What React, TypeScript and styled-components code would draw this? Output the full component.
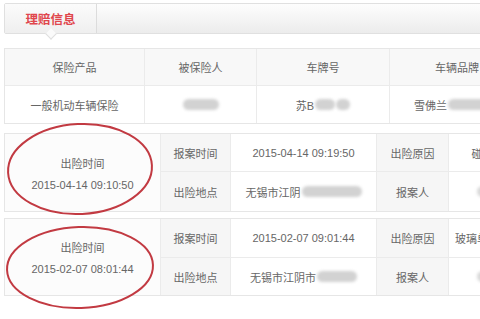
import React from "react";
import styled, { createGlobalStyle } from "styled-components";

const GlobalStyle = createGlobalStyle`
  html, body {
    margin: 0;
    padding: 0;
    background: #ffffff;
    overflow: hidden;
  }
  body {
    font-family: "Liberation Sans", "Noto Sans CJK SC", sans-serif;
    font-size: 11px;
    color: #666666;
  }
`;

const Page = styled.main`
  position: relative;
  width: 560px;
  height: 319px;
  padding: 3px 0 0 4px;
  box-sizing: border-box;
`;

const TabBar = styled.div`
  height: 29px;
  display: flex;
  border: 1px solid #e0e0e0;
  border-radius: 2px;
  background: linear-gradient(#fdfdfd, #ececec);
`;

const Tab = styled.div`
  position: relative;
  width: 91px;
  display: flex;
  align-items: center;
  justify-content: center;
  border-right: 1px solid #dcdcdc;
  background: linear-gradient(#fbfbfb, #efefef);
  color: #e0464c;
  font-size: 12.5px;
  font-weight: bold;

  &::after {
    content: "";
    position: absolute;
    left: 42px;
    bottom: -5px;
    width: 7px;
    height: 7px;
    background: #fafafa;
    border-right: 1px solid #dedede;
    border-bottom: 1px solid #dedede;
    transform: rotate(45deg);
  }
`;

const Table = styled.div<{ $top: number }>`
  margin-top: ${(p) => p.$top}px;
  border: 1px solid #e6e6e6;
  border-right: none;
  display: flex;
  flex-direction: column;
`;

const Row = styled.div<{ $h: number; $shade?: boolean }>`
  display: flex;
  height: ${(p) => p.$h}px;
  background: ${(p) => (p.$shade ? "#f8f8f8" : "#ffffff")};
  & + & {
    border-top: 1px solid #ebebeb;
  }
`;

const Cell = styled.div<{ $w: number; $label?: boolean }>`
  flex: 0 0 ${(p) => p.$w}px;
  display: flex;
  align-items: center;
  justify-content: center;
  gap: 1px;
  white-space: nowrap;
  overflow: hidden;
  border-right: 1px solid #ebebeb;
  box-sizing: border-box;
  background: ${(p) => (p.$label ? "#f6f6f6" : "transparent")};
`;

const Block = styled.div<{ $top: number }>`
  margin-top: ${(p) => p.$top}px;
  display: flex;
  border: 1px solid #e6e6e6;
  border-right: none;
`;

const TimeCell = styled.div`
  flex: 0 0 155px;
  display: flex;
  flex-direction: column;
  align-items: center;
  justify-content: center;
  gap: 8px;
  border-right: 1px solid #ebebeb;
  background: #fcfcfc;
`;

const Grid = styled.div`
  flex: 1;
  display: flex;
  flex-direction: column;
`;

const Mask = styled.span<{ $w: number; $tone?: string }>`
  display: inline-block;
  width: ${(p) => p.$w}px;
  height: 11px;
  border-radius: 6px;
  background: ${(p) => p.$tone ?? "#d2d2d2"};
  filter: blur(1.5px);
`;

const Marks = styled.svg`
  position: absolute;
  left: 0;
  top: 0;
  pointer-events: none;
`;

type Claim = {
  accident: string;
  report: string;
  place: string;
  placeMask: number;
  reason: string;
  top: number;
  rows: [number, number];
};

const claims: Claim[] = [
  {
    accident: "2015-04-14 09:10:50",
    report: "2015-04-14 09:19:50",
    place: "无锡市江阴",
    placeMask: 60,
    reason: "碰撞事故",
    top: 9,
    rows: [37, 39],
  },
  {
    accident: "2015-02-07 08:01:44",
    report: "2015-02-07 09:01:44",
    place: "无锡市江阴市",
    placeMask: 40,
    reason: "玻璃单独破碎险",
    top: 6,
    rows: [38, 37],
  },
];

function ClaimBlock({ c }: { c: Claim }) {
  return (
    <Block $top={c.top}>
      <TimeCell>
        <span>出险时间</span>
        <span>{c.accident}</span>
      </TimeCell>
      <Grid>
        <Row $h={c.rows[0]}>
          <Cell $w={70} $label>报案时间</Cell>
          <Cell $w={146}>{c.report}</Cell>
          <Cell $w={72} $label>出险原因</Cell>
          <Cell $w={90}>{c.reason}</Cell>
        </Row>
        <Row $h={c.rows[1]}>
          <Cell $w={70} $label>出险地点</Cell>
          <Cell $w={146}>
            {c.place}
            <Mask $w={c.placeMask} />
          </Cell>
          <Cell $w={72} $label>报案人</Cell>
          <Cell $w={90}>
            <Mask $w={34} $tone="#d8d8d8" />
          </Cell>
        </Row>
      </Grid>
    </Block>
  );
}

export default function App() {
  return (
    <>
      <GlobalStyle />
      <Page>
        <TabBar>
          <Tab>理赔信息</Tab>
        </TabBar>

        <Table $top={14}>
          <Row $h={36} $shade>
            <Cell $w={140}>保险产品</Cell>
            <Cell $w={112}>被保险人</Cell>
            <Cell $w={133}>车牌号</Cell>
            <Cell $w={135}>车辆品牌</Cell>
          </Row>
          <Row $h={37}>
            <Cell $w={140}>一般机动车辆保险</Cell>
            <Cell $w={112}>
              <Mask $w={36} />
            </Cell>
            <Cell $w={133}>
              苏B<Mask $w={20} /> <Mask $w={14} />
            </Cell>
            <Cell $w={135}>
              雪佛兰<Mask $w={52} />
            </Cell>
          </Row>
        </Table>

        {claims.map((c) => (
          <ClaimBlock key={c.accident} c={c} />
        ))}

        <Marks width="480" height="319" viewBox="0 0 480 319">
          <ellipse cx="80" cy="169" rx="72" ry="45" fill="none" stroke="#c23a42" strokeWidth="2" transform="rotate(-3 80 169)" />
          <ellipse cx="80" cy="267.5" rx="73" ry="40.5" fill="none" stroke="#c23a42" strokeWidth="2" transform="rotate(-2 80 267.5)" />
        </Marks>
      </Page>
    </>
  );
}
